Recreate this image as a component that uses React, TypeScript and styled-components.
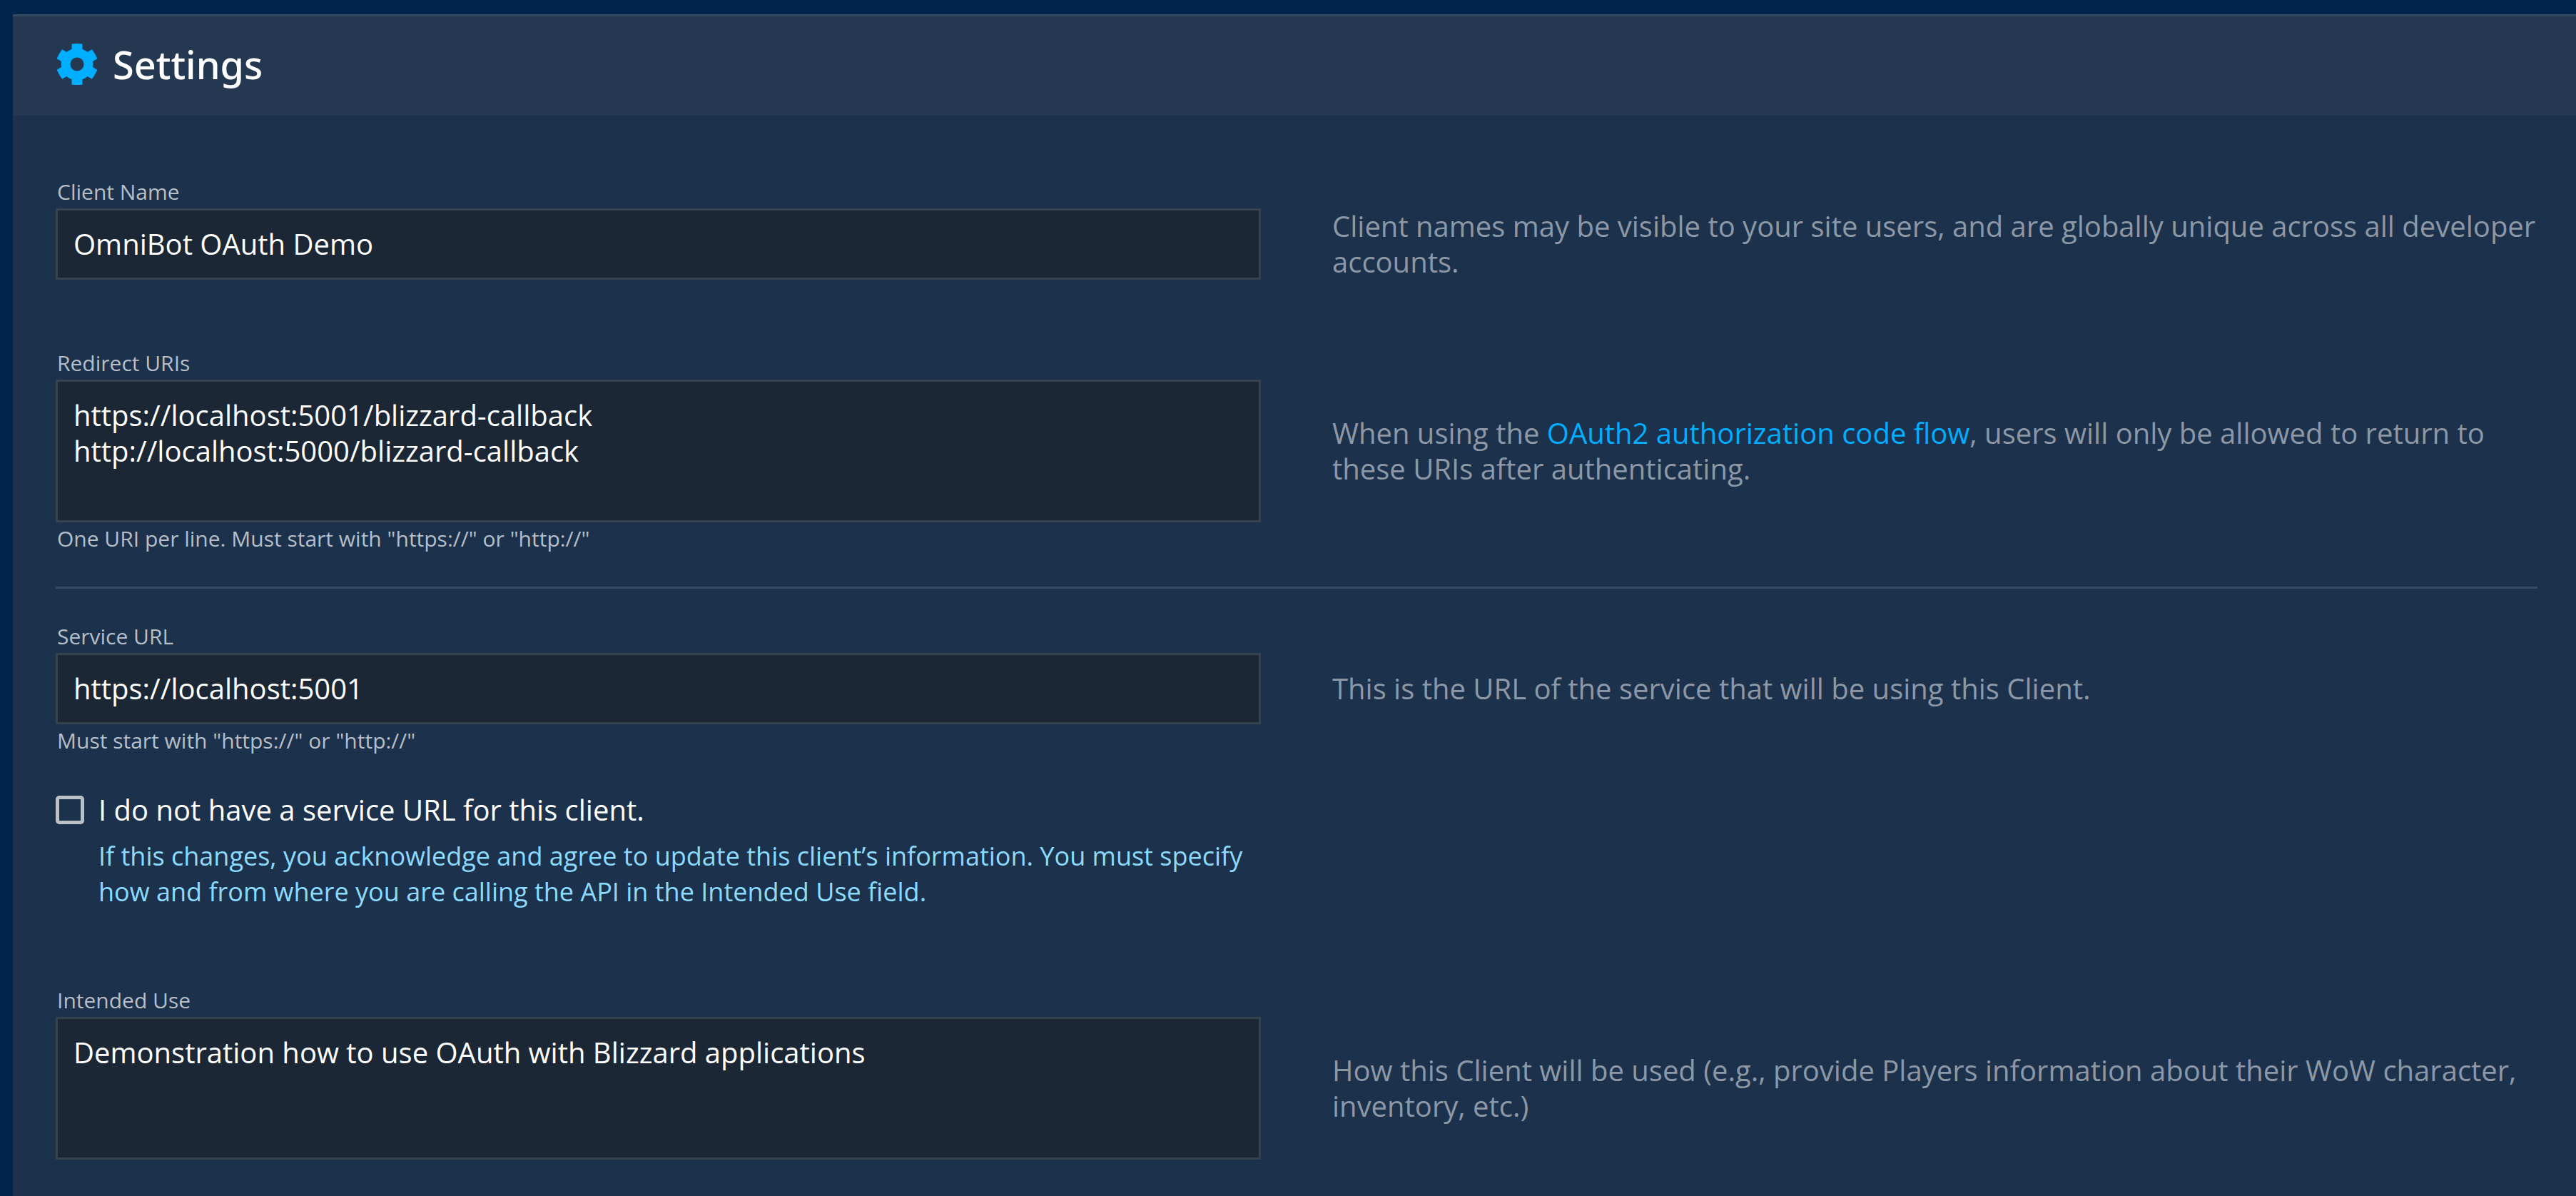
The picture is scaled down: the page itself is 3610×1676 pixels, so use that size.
import React from "react";
import styled, { createGlobalStyle } from "styled-components";

const GlobalStyle = createGlobalStyle`
  *, *::before, *::after { box-sizing: border-box; }
  body {
    margin: 0;
    background: #00244c;
    color: #ffffff;
    font-family: "Open Sans", "Noto Sans", sans-serif;
    font-size: 40px;
    line-height: 50px;
  }
`;

const Page = styled.main`
  padding: 20px 0 0 18px;
`;

const Panel = styled.section`
  min-height: calc(100vh - 20px);
  background: #1c314b;
`;

const PanelHeader = styled.header`
  display: flex;
  align-items: center;
  gap: 20px;
  height: 142px;
  padding: 0 60px 5px;
  border-top: 3px solid #364961;
  background: #243852;
`;

const Title = styled.h1`
  margin: 0;
  font-family: "Noto Sans", sans-serif;
  font-size: 54px;
  font-weight: 500;
  line-height: 70px;
`;

const Form = styled.form`
  padding: 85px 54px 0 60px;
`;

const Row = styled.div<{ $space?: number }>`
  display: grid;
  grid-template-columns: 1fr 1fr;
  column-gap: 100px;
  align-items: center;
  margin-bottom: ${(p) => p.$space ?? 0}px;
`;

const Field = styled.div<{ $hinted?: boolean }>`
  display: flex;
  flex-direction: column;
  padding-bottom: ${(p) => (p.$hinted ? 0 : 45)}px;
`;

const Label = styled.label`
  padding: 2px 2px 3px;
  color: #b6bec8;
  font-size: 30px;
  line-height: 40px;
`;

const Hint = styled.p`
  margin: 0;
  padding: 3px 2px 2px;
  color: #b6bec8;
  font-size: 30px;
  line-height: 40px;
`;

const TextInput = styled.input`
  width: 100%;
  height: 100px;
  padding: 0 22px 2px;
  border: 3px solid #37424f;
  border-radius: 0;
  outline: none;
  background: #1b2734;
  color: #ffffff;
  font: inherit;
`;

const TextArea = styled.textarea`
  display: block;
  width: 100%;
  height: 200px;
  padding: 22px;
  border: 3px solid #37424f;
  border-radius: 0;
  outline: none;
  resize: none;
  background: #1b2734;
  color: #ffffff;
  font: inherit;
  line-height: 50px;
`;

const Help = styled.p`
  margin: 0;
  color: #8d98a7;
`;

const Link = styled.a`
  color: #00aeff;
  text-decoration: none;
`;

const Divider = styled.hr`
  height: 3px;
  margin: 0 0 45px;
  border: 0;
  background: #364961;
`;

const Choice = styled.div`
  display: grid;
  grid-template-columns: 40px 1fr;
  column-gap: 20px;
  row-gap: 15px;
  align-items: center;
`;

const Checkbox = styled.input`
  appearance: none;
  width: 40px;
  height: 40px;
  margin: 0;
  border: 5px solid #bbc1c9;
  border-radius: 5px;
  &:checked { background: #00aeff; }
`;

const Note = styled.p`
  grid-column: 2;
  margin: 0;
  color: #8cdbff;
  font-size: 36px;
`;

function GearIcon() {
  return (
    <svg width="60" height="60" viewBox="0 0 60 60" aria-hidden="true">
      <g fill="#00aeff">
        {[0, 60, 120].map((angle) => (
          <path key={angle} d="M22.500 1.500Q30 .5 37.500 1.500V58.500Q30 59.500 22.500 58.500Z" transform={`rotate(${angle} 30 30)`} />
        ))}
        <circle cx="30" cy="30" r="22.500" />
      </g>
      <circle cx="30" cy="30" r="9.500" fill="#243852" />
    </svg>
  );
}

export default function App() {
  return (
    <>
      <GlobalStyle />
      <Page>
        <Panel>
          <PanelHeader>
            <GearIcon />
            <Title>Settings</Title>
          </PanelHeader>
          <Form>
            <Row $space={50}>
              <Field>
                <Label htmlFor="name">Client Name</Label>
                <TextInput id="name" defaultValue="OmniBot OAuth Demo" />
              </Field>
              <Help>
                Client names may be visible to your site users, and are globally unique across all developer accounts.
              </Help>
            </Row>
            <Row $space={45}>
              <Field $hinted>
                <Label htmlFor="redirects">Redirect URIs</Label>
                <TextArea
                  id="redirects"
                  spellCheck={false}
                  defaultValue={"https://localhost:5001/blizzard-callback\nhttp://localhost:5000/blizzard-callback"}
                />
                <Hint>One URI per line. Must start with "https://" or "http://"</Hint>
              </Field>
              <Help>
                When using the <Link href="#oauth">OAuth2 authorization code flow</Link>, users will only be allowed to
                return to these URIs after authenticating.
              </Help>
            </Row>
            <Divider />
            <Row $space={50}>
              <Field $hinted>
                <Label htmlFor="service">Service URL</Label>
                <TextInput id="service" defaultValue="https://localhost:5001" />
                <Hint>Must start with "https://" or "http://"</Hint>
              </Field>
              <Help>This is the URL of the service that will be using this Client.</Help>
            </Row>
            <Row $space={105}>
              <Choice>
                <Checkbox type="checkbox" id="noservice" />
                <label htmlFor="noservice">I do not have a service URL for this client.</label>
                <Note>
                  If this changes, you acknowledge and agree to update this client’s information. You must specify how
                  and from where you are calling the API in the Intended Use field.
                </Note>
              </Choice>
            </Row>
            <Row>
              <Field>
                <Label htmlFor="use">Intended Use</Label>
                <TextArea
                  id="use"
                  spellCheck={false}
                  defaultValue="Demonstration how to use OAuth with Blizzard applications"
                />
              </Field>
              <Help>
                How this Client will be used (e.g., provide Players information about their WoW character, inventory,
                etc.)
              </Help>
            </Row>
          </Form>
        </Panel>
      </Page>
    </>
  );
}
